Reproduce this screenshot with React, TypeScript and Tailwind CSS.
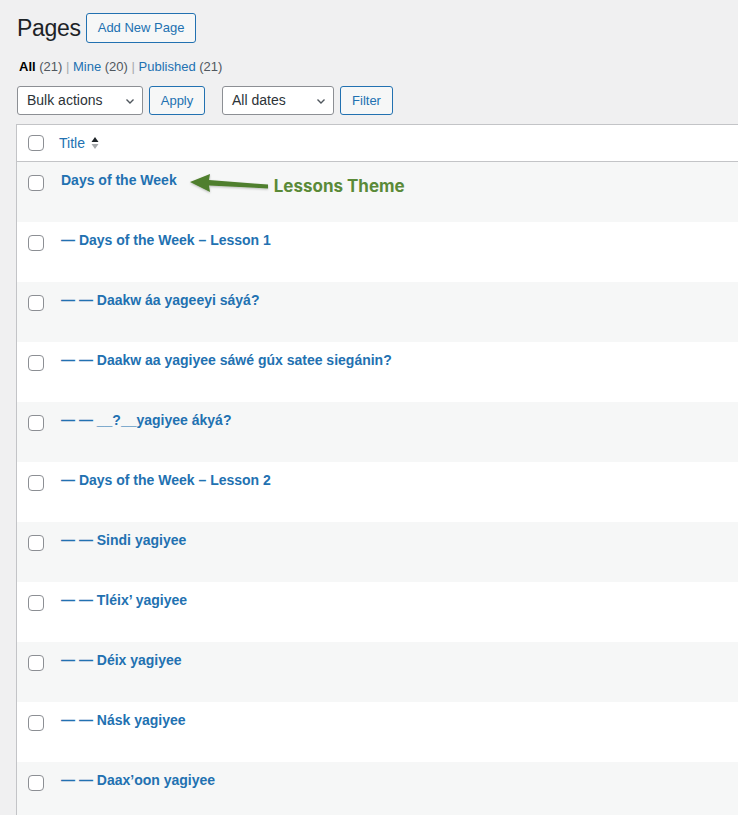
import React from "react";

const rows = [
  "Days of the Week",
  "— Days of the Week – Lesson 1",
  "— — Daakw áa yageeyi sáyá?",
  "— — Daakw aa yagiyee sáwé gúx satee siegánin?",
  "— — __?__yagiyee ákyá?",
  "— Days of the Week – Lesson 2",
  "— — Sindi yagiyee",
  "— — Tléix’ yagiyee",
  "— — Déix yagiyee",
  "— — Násk yagiyee",
  "— — Daax’oon yagiyee",
];

function Checkbox() {
  return <span className="block w-4 h-4 rounded-[4px] border border-[#8c8f94] bg-white shrink-0" />;
}

function Chevron() {
  return (
    <svg width="12" height="12" viewBox="0 0 12 12" className="shrink-0">
      <path d="M2.5 4.5 L6 8 L9.5 4.5" fill="none" stroke="#50575e" strokeWidth="1.4" />
    </svg>
  );
}

export default function App() {
  return (
    <div
      className="w-[738px] h-[815px] overflow-hidden bg-[#f0f0f1] text-[#1d2327]"
      style={{ fontFamily: "'Liberation Sans', Arial, sans-serif" }}
    >
      <div className="pl-[17px] pt-[13px]">
        <div className="flex items-center gap-[5px] h-[30px]">
          <h1 className="text-[23px] leading-[30px] font-normal text-[#1d2327] -tracking-[0.3px]">Pages</h1>
          <span className="h-[30px] px-[11px] flex items-center border border-[#2271b1] rounded-[3px] text-[#2271b1] text-[13px] bg-[#f6f7f7]">
            Add New Page
          </span>
        </div>
        <div className="mt-[16px] pl-[2px] text-[13px] leading-[16px] text-[#50575e]">
          <span className="font-bold text-black">All</span> (21) <span className="text-[#a7aaad]">|</span>{" "}
          <span className="text-[#2271b1]">Mine</span> (20) <span className="text-[#a7aaad]">|</span>{" "}
          <span className="text-[#2271b1]">Published</span> (21)
        </div>
        <div className="mt-[11px] flex items-center h-[29px]">
          <div className="w-[126px] h-[29px] border border-[#8c8f94] rounded-[3px] bg-white flex items-center justify-between pl-[9px] pr-[6px] text-[14px] text-[#2c3338]">
            Bulk actions
            <Chevron />
          </div>
          <div className="ml-[6px] w-[56px] h-[29px] border border-[#2271b1] rounded-[3px] bg-[#f6f7f7] flex items-center justify-center text-[13px] text-[#2271b1]">
            Apply
          </div>
          <div className="ml-[17px] w-[112px] h-[29px] border border-[#8c8f94] rounded-[3px] bg-white flex items-center justify-between pl-[9px] pr-[6px] text-[14px] text-[#2c3338]">
            All dates
            <Chevron />
          </div>
          <div className="ml-[6px] w-[53px] h-[29px] border border-[#2271b1] rounded-[3px] bg-[#f6f7f7] flex items-center justify-center text-[13px] text-[#2271b1]">
            Filter
          </div>
        </div>
      </div>
      <div className="ml-[16px] mt-[9px] border-l border-t border-[#c3c4c7] bg-white">
        <div className="h-[37px] border-b border-[#c3c4c7] flex items-center pl-[11px]">
          <Checkbox />
          <span className="ml-[15px] text-[14px] text-[#2271b1]">Title</span>
          <svg width="10" height="16" viewBox="0 0 10 16" className="ml-[5px]">
            <path d="M1.5 7 L5 2 L8.5 7 Z" fill="#1d2327" />
            <path d="M1.5 9 L5 14 L8.5 9 Z" fill="#a7aaad" />
          </svg>
        </div>
        {rows.map((r, i) => (
          <div
            key={i}
            className={`h-[60px] flex items-start pl-[11px] pt-[9px] ${i % 2 === 0 ? "bg-[#f6f7f7]" : "bg-white"}`}
          >
            <div className="pt-[4px]">
              <Checkbox />
            </div>
            <span className="ml-[17px] text-[14px] leading-[18px] font-bold text-[#2271b1] whitespace-nowrap">{r}</span>
            {i === 0 && (
              <div className="flex items-start ml-[12px]">
                <svg width="82" height="26" viewBox="0 0 82 26" className="shrink-0">
                  <defs>
                    <filter id="sh" x="-20%" y="-40%" width="140%" height="180%">
                      <feDropShadow dx="0" dy="1" stdDeviation="1" floodColor="#000" floodOpacity="0.25" />
                    </filter>
                  </defs>
                  <g filter="url(#sh)">
                    <path d="M1 11 L21 3 L20 9 L79 13.5 L79 17.5 L20 14.5 L21 21 Z" fill="#4f7f2e" />
                  </g>
                </svg>
                <span
                  className="ml-[3px] mt-[5px] text-[17px] leading-[20px] font-bold text-[#5a8a38] whitespace-nowrap"
                  style={{ fontFamily: "Inter, 'Liberation Sans', sans-serif" }}
                >
                  Lessons Theme
                </span>
              </div>
            )}
          </div>
        ))}
      </div>
    </div>
  );
}
